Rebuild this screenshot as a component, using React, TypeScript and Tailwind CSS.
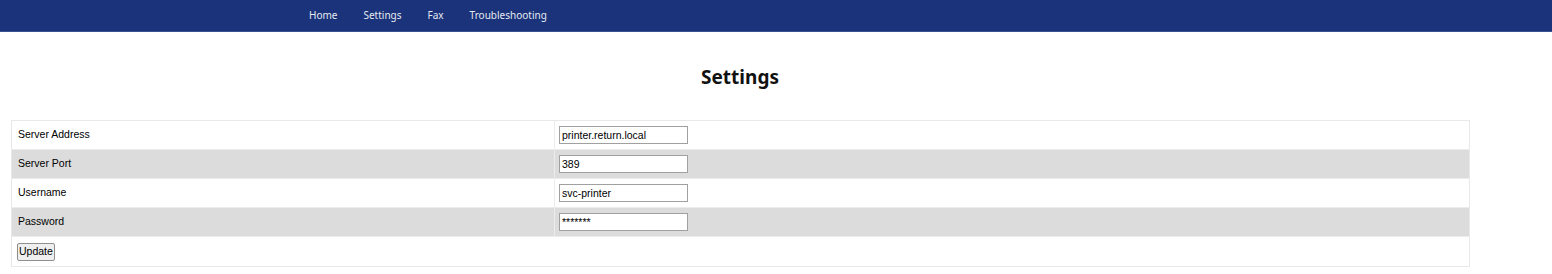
import type { JSX } from "react";

const rows = [
    { label: "Server Address", value: "printer.return.local", type: "text" },
    { label: "Server Port", value: "389", type: "text" },
    { label: "Username", value: "svc-printer", type: "text" },
    { label: "Password", value: "*******", type: "text" },
];

export default function App(): JSX.Element {
    return (
        <div className="min-h-[274px] bg-white font-['Liberation_Sans',Arial,sans-serif] text-black">
            <nav className="flex h-[32px] items-center border-b border-[#3a4f8f] bg-[#1a337a] pl-[309px] font-['Noto_Sans',sans-serif] text-[10px] text-[#e6e9f2]">
                <a className="mr-[26px]">Home</a>
                <a className="mr-[26px]">Settings</a>
                <a className="mr-[26px]">Fax</a>
                <a>Troubleshooting</a>
            </nav>
            <h1 className="mt-[33px] pr-[72px] text-center font-['Noto_Sans',sans-serif] text-[19px] font-bold leading-[24px] text-[#111]">
                Settings
            </h1>
            <div className="ml-[11px] mt-[31px] w-[1459px] border border-[#e8e8e8]">
                {rows.map((r, i) => (
                    <div
                        key={r.label}
                        className={`flex h-[29px] items-center border-b border-[#ececec] text-[10.5px] ${i % 2 === 1 ? "bg-[#dcdcdc]" : "bg-white"}`}
                    >
                        <div className="flex h-full w-[543px] items-center border-r border-[#ececec] pl-[6px]">
                            {r.label}
                        </div>
                        <div className="pl-[4px]">
                            <input
                                type={r.type}
                                defaultValue={r.value}
                                className="h-[18px] w-[129px] border border-[#a0a0a0] bg-white px-[2px] text-[10.5px] text-black outline-none"
                            />
                        </div>
                    </div>
                ))}
                <div className="flex h-[29px] items-center pl-[5px]">
                    <button className="h-[18px] rounded-[2px] border border-[#8f8f8f] bg-[#efefef] px-[1px] text-[10.5px] leading-none">
                        Update
                    </button>
                </div>
            </div>
        </div>
    );
}
